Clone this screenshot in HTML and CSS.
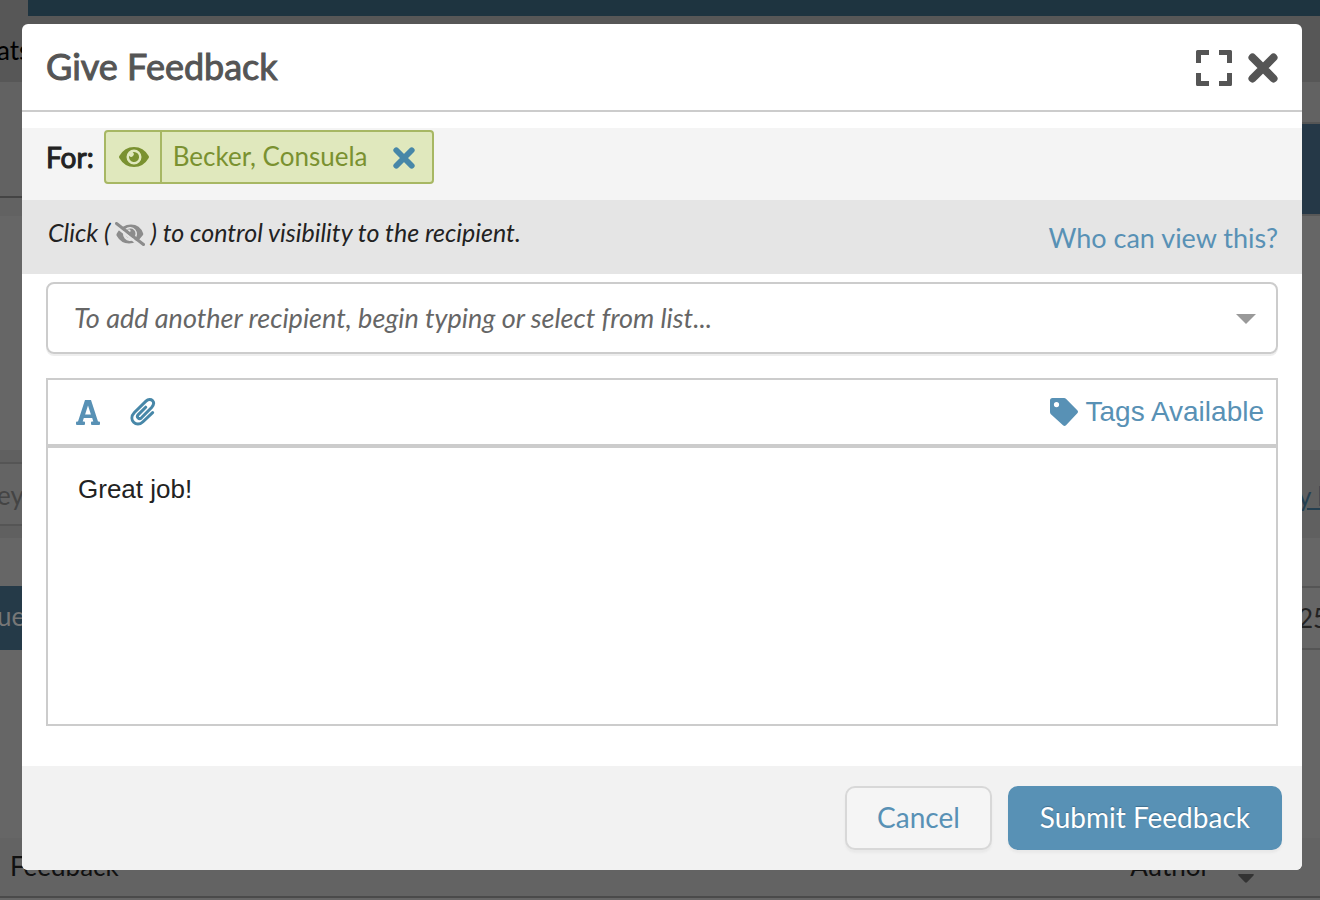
FILE: index.html
```html
<!DOCTYPE html>
<html lang="en">
<head>
<meta charset="utf-8">
<title>Give Feedback</title>
<link rel="stylesheet" href="styles.css">
</head>
<body>
<div class="page">
  <div class="topbar"></div>
  <div class="row tabs"><span>ats</span></div>
  <div class="row banner">
    <div class="banner-left"></div>
    <div class="banner-action"></div>
  </div>
  <div class="row spacer-large"></div>
  <div class="row search">
    <div class="search-box">ey</div>
    <a class="search-link" href="#">y l</a>
  </div>
  <div class="row spacer-small"></div>
  <div class="row actions">
    <div class="action-primary">ue</div>
    <div class="action-count">25</div>
  </div>
  <div class="row spacer-list"></div>
  <div class="row list-head">
    <span>Feedback</span>
    <span class="author">Author <svg class="sort" viewBox="0 0 16 9"><path d="M1 0H15Q16.500 .5 15.500 1.500L9 8.300Q8 9.200 7 8.300L.5 1.500Q-.5 .5 1 0Z"/></svg></span>
  </div>
</div>

<div class="overlay">
  <form class="modal" role="dialog" aria-labelledby="title">
    <header class="modal-head">
      <h1 class="title" id="title">Give Feedback</h1>
      <button class="icon-btn" type="button" aria-label="Full screen">
        <svg class="i-expand" viewBox="0 0 36 36"><path d="M1.500 0H13V5H5V13H0V1.500Q0 0 1.500 0ZM23 0H34.500Q36 0 36 1.500V13H31V5H23ZM0 23H5V31H13V36H1.500Q0 36 0 34.500ZM31 23H36V34.500Q36 36 34.500 36H23V31H31Z"/></svg>
      </button>
      <button class="icon-btn" type="button" aria-label="Close">
        <svg class="i-close" viewBox="0 0 30 30"><path d="M4.500 4.500L25.500 25.500M25.500 4.500L4.500 25.500"/></svg>
      </button>
    </header>

    <section class="recipients">
      <span class="for">For:</span>
      <div class="chip">
        <button class="chip-eye" type="button" aria-label="Toggle visibility">
          <svg class="i-eye" viewBox="0 0 30 20"><path fill-rule="evenodd" d="M.3 9Q5.500 0 15 0T29.700 9Q30.200 10 29.700 11Q24.500 20 15 20T.3 11Q-.2 10 .3 9ZM15 2.500A7.500 7.500 0 1 0 15 17.500A7.500 7.500 0 1 0 15 2.500ZM15 5A5 5 0 1 1 10.200 8.700A2.500 2.500 0 1 0 13.700 5.200Q14.300 5 15 5Z"/></svg>
        </button>
        <span class="chip-name">Becker, Consuela</span>
        <button class="chip-remove" type="button" aria-label="Remove recipient">
          <svg class="i-remove" viewBox="0 0 30 30"><path d="M4.500 4.500L25.500 25.500M25.500 4.500L4.500 25.500"/></svg>
        </button>
      </div>
    </section>

    <section class="hint">
      <p class="hint-text">Click (<svg class="i-eye-off" viewBox="0 0 30 24"><path fill="#8c8c8c" fill-rule="evenodd" d="M1.800 11.500Q7 2.500 16 2.500T28.200 11.500Q28.500 12.500 27.800 13.300Q22 21.500 14 21.500T1.500 13.500Q1.200 12.500 1.800 11.500ZM15.500 5A7 7 0 1 0 14.500 19A7 7 0 1 0 15.500 5Z"/><circle cx="15.500" cy="11.500" r="5" fill="#8c8c8c"/><circle cx="14" cy="8.800" r="1.600" fill="#e5e5e5"/><path d="M0 3.600L25 23.600" stroke="#e5e5e5" stroke-width="2.600"/><path d="M1.500 1.500L28.500 22.500" stroke="#8c8c8c" stroke-width="3" stroke-linecap="round"/></svg>) to control visibility to the recipient.</p>
      <a class="hint-link" href="#">Who can view this?</a>
    </section>

    <div class="combo">
      <input class="combo-input" type="text" aria-label="Add another recipient" placeholder="To add another recipient, begin typing or select from list...">
      <button class="combo-toggle" type="button" aria-label="Show list">
        <svg class="i-caret" viewBox="0 0 20 10"><path d="M0 0H20L10 10Z"/></svg>
      </button>
    </div>

    <div class="editor">
      <div class="toolbar">
        <button class="tool" type="button" aria-label="Text format">
          <svg class="i-font" viewBox="0 0 24 25"><path fill-rule="evenodd" d="M9 0H15L22 21.500H23Q24 21.500 24 22.500V24Q24 25 23 25H16Q15 25 15 24V22.500Q15 21.500 16 21.500H17.300L16.200 18H7.800L6.700 21.500H8Q9 21.500 9 22.500V24Q9 25 8 25H1Q0 25 0 24V22.500Q0 21.500 1 21.500H2ZM12 5.500L9.100 14.500H14.900Z"/></svg>
        </button>
        <button class="tool" type="button" aria-label="Attach file">
          <svg class="i-clip" viewBox="0 0 26 28"><path d="M15.700 9.200L8.300 16.600C5.900 19.200 9.100 22 11.400 19.800L21.600 9.500C27 3.600 20.500 -1 16 3.200L4.400 14.500C-2.500 21.800 6.500 30.200 13 23.700L22.600 14.600"/></svg>
        </button>
        <a class="tags" href="#">
          <svg class="i-tag" viewBox="0 0 28 28"><path fill-rule="evenodd" d="M2.500 0H14Q15.300 0 16.200 .9L27.300 12.200Q28.700 13.700 27.300 15.200L16 27.300Q14.500 28.700 13 27.300L.9 16.200Q0 15.300 0 14V2.500Q0 0 2.500 0ZM6.500 4A2.600 2.600 0 1 0 6.500 9.200A2.600 2.600 0 1 0 6.500 4Z"/></svg>
          Tags Available
        </a>
      </div>
      <textarea class="message" aria-label="Feedback">Great job!</textarea>
    </div>

    <footer class="modal-foot">
      <button class="btn" type="button">Cancel</button>
      <button class="btn btn-primary" type="submit">Submit Feedback</button>
    </footer>
  </form>
</div>
</body>
</html>
```

FILE: styles.css
```css
* { box-sizing: border-box; }

body {
  margin: 0;
  font-family: Lato, "Noto Sans", sans-serif;
  font-size: 28px;
  line-height: 32px;
  color: #222;
  background: #666;
}

button, input, textarea { font: inherit; margin: 0; }
button { padding: 0; border: 0; background: none; cursor: pointer; }
svg { display: block; fill: currentColor; }
a { color: #5891b5; text-decoration: none; }

/* Dimmed page behind the dialog */
.page {
  display: flex;
  flex-direction: column;
  min-height: 100vh;
  overflow: hidden;
  font-size: 26px;
  color: #111;
}
.topbar { height: 16px; border-left: 28px solid #575757; background: #1e3440; }
.row { display: flex; justify-content: space-between; overflow: hidden; white-space: nowrap; }
.tabs { height: 66px; padding-top: 18px; background: #575757; color: #000; }
.tabs span, .search-box, .action-primary { text-indent: -3px; }
.banner { height: 134px; padding-top: 40px; background: #626262; align-items: flex-start; }
.banner-left { width: 40px; height: 76px; border-bottom: 2px solid #444; }
.banner-action { width: 40px; height: 94px; border-top: 2px solid #555; border-bottom: 2px solid #575757; background: #253847; }
.spacer-large { height: 234px; }
.search { height: 88px; background: #606060; padding: 12px 0; }
.search-box { width: 40px; height: 64px; padding-top: 15px; border: solid #555; border-width: 2px 0; background: #646464; color: #444; }
.search-link { width: 22px; padding-top: 18px; color: #253f50; text-decoration: underline; }
.spacer-small { height: 48px; }
.actions { height: 64px; }
.action-primary { width: 40px; padding-top: 14px; background: #253a48; color: #777; }
.action-count { width: 22px; padding-top: 14px; border: solid #555; border-width: 2px 0; color: #222; }
.spacer-list { flex: 1; }
.list-head { height: 60px; padding: 12px 66px 0 10px; border-bottom: 2px solid #4a4a4a; background: #636363; margin-bottom: 2px; }
.author { display: flex; align-items: flex-start; gap: 28px; }
.sort { width: 16px; height: 9px; margin-top: 24px; fill: #333; }

/* Dialog */
.overlay { position: absolute; inset: 0; padding: 24px 18px 30px 22px; }
.modal {
  display: flex;
  flex-direction: column;
  height: 100%;
  overflow: hidden;
  border-radius: 6px;
  background: #fff;
}
.modal-head {
  display: flex;
  align-items: center;
  gap: 16px;
  height: 88px;
  padding: 2px 24px 0;
  border-bottom: 2px solid #ccc;
  color: #555;
}
.title {
  flex: 1;
  margin: 0;
  padding-bottom: 4px;
  font-size: 36px;
  line-height: 44px;
  font-weight: 400;
  -webkit-text-stroke: 1px;
}
.icon-btn { color: inherit; }
.i-expand { width: 36px; height: 36px; }
.i-close { width: 30px; height: 30px; }
.i-close path, .i-remove path { fill: none; stroke: currentColor; stroke-width: 8; stroke-linecap: round; }

.recipients {
  display: flex;
  align-items: center;
  gap: 10px;
  height: 72px;
  margin-top: 16px;
  padding: 0 24px 14px;
  background: #f4f4f4;
}
.for { -webkit-text-stroke: 1px; }
.chip {
  display: flex;
  align-items: stretch;
  height: 54px;
  border: 2px solid #a7b763;
  border-radius: 4px;
  background: #e0e8bd;
  color: #7a9130;
}
.chip-eye { width: 56px; padding-left: 13px; border-right: 2px solid #a7b763; color: inherit; }
.i-eye { width: 30px; height: 20px; }
.chip-name { padding: 8px 25px 0 11px; font-size: 26px; }
.chip-remove { padding: 2px 17px 0 0; color: #4787a8; }
.i-remove { width: 22px; height: 22px; }

.hint {
  display: flex;
  align-items: center;
  justify-content: space-between;
  height: 74px;
  padding: 2px 24px 0 26px;
  background: #e5e5e5;
}
.hint-text { margin: 0 0 12px; font-size: 25px; font-style: italic; }
.i-eye-off { display: inline-block; width: 30px; height: 24px; margin: 0 6px 0 4px; vertical-align: -4px; }
.hint-link { font-size: 27px; }

.combo {
  display: flex;
  height: 72px;
  margin: 8px 24px 24px;
  border: 2px solid #ccc;
  border-radius: 8px;
  box-shadow: 0 2px 0 #eee;
}
.combo-input { flex: 1; min-width: 0; padding: 0 26px; border: 0; background: none; font-size: 27px; font-style: italic; outline: 0; }
.combo-input::placeholder { color: #666; }
.combo-toggle { padding: 2px 20px 0; color: #999; }
.i-caret { width: 20px; height: 10px; }

.editor {
  display: flex;
  flex: 1;
  flex-direction: column;
  margin: 0 24px 40px;
  border: 2px solid #ccc;
  font-family: "Liberation Sans", Arial, sans-serif;
}
.toolbar {
  display: flex;
  align-items: center;
  gap: 30px;
  height: 68px;
  padding: 0 12px 0 28px;
  border-bottom: 4px solid #ccc;
  color: #5891b5;
}
.tool { color: inherit; }
.i-font { width: 24px; height: 25px; }
.i-clip { width: 26px; height: 28px; }
.i-clip path { fill: none; stroke: #4787a8; stroke-width: 3; stroke-linecap: round; }
.tags { display: flex; align-items: center; gap: 8px; margin-left: auto; }
.i-tag { width: 28px; height: 28px; }
.message { flex: 1; width: 100%; padding: 25px 30px; border: 0; outline: 0; resize: none; background: none; color: #222; font-size: 26px; }

.modal-foot {
  display: flex;
  align-items: center;
  justify-content: flex-end;
  gap: 16px;
  height: 104px;
  padding: 0 20px;
  background: #f2f2f2;
}
.btn {
  height: 64px;
  padding: 0 30px 2px;
  border: 2px solid #d8d8d8;
  border-radius: 10px;
  background: #f5f5f5;
  box-shadow: 0 3px 2px #e9e9e9;
  color: #5891b5;
}
.btn-primary { border-color: #5891b5; background: #5891b5; color: #fff; text-shadow: 0 -1px 1px #41708f; }
```
